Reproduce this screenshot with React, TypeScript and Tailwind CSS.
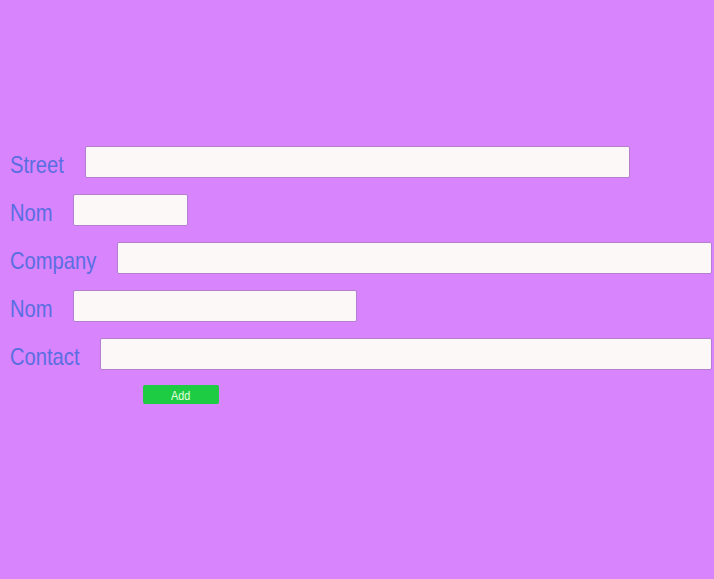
import { useState } from "react"

const rows = [
  { label: "Street", labelWidth: "w-[75px]", width: "w-[545px]" },
  { label: "Nom", labelWidth: "w-[63px]", width: "w-[115px]" },
  { label: "Company", labelWidth: "w-[107px]", width: "w-[595px]" },
  { label: "Nom", labelWidth: "w-[63px]", width: "w-[284px]" },
  { label: "Contact", labelWidth: "w-[90px]", width: "w-[612px]" },
]

export default function App() {
  const [values, setValues] = useState<string[]>(rows.map(() => ""))

  return (
    <div className="min-h-[579px] w-full bg-[#d784fd] font-['Liberation_Sans',Arial,sans-serif]">
      <div className="flex flex-col gap-4 pl-[10px] pt-[146px]">
        {rows.map((row, i) => (
          <div key={i} className="flex items-center">
            <label className={`${row.labelWidth} shrink-0 whitespace-nowrap pt-[6px] text-[24px] leading-none text-[#5a6ee2]`}>
              <span className="inline-block origin-left scale-x-[0.84]">{row.label}</span>
            </label>
            <input
              className={`${row.width} h-8 shrink-0 rounded-[2px] border border-[#b47fd0] bg-[#fcf8f8] px-2 outline-none`}
              value={values[i]}
              onChange={(e) => {
                const next = [...values]
                next[i] = e.target.value
                setValues(next)
              }}
            />
          </div>
        ))}
        <button className="-mt-[1px] ml-[133px] h-[19px] w-[76px] rounded-[2px] bg-[#1ecc44] pt-[3px] text-[12px] leading-none text-[#e6ffe0]">
          <span className="inline-block scale-x-[0.9]">Add</span>
        </button>
      </div>
    </div>
  )
}
